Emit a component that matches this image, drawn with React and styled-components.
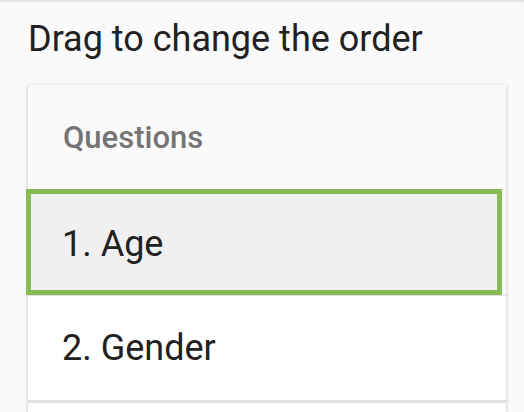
import React from 'react';
import styled, { createGlobalStyle } from 'styled-components';

const GlobalStyle = createGlobalStyle`
    html, body {
        margin: 0;
        padding: 0;
        background: #fafafa;
        font-family: Roboto, "Liberation Sans", sans-serif;
    }
`

const questions = [
    { id: 1, label: 'Age', dragging: true },
    { id: 2, label: 'Gender' },
]

export default function App() {
    return (
        <>
            <GlobalStyle />
            <Page>
                <Title>Drag to change the order</Title>
                <Card>
                    <Header>Questions</Header>
                    {
                        questions.map((q) => (
                            <Row key={q.id} $dragging={q.dragging}>
                                {q.id}. {q.label}
                            </Row>
                        ))
                    }
                    <Row />
                </Card>
            </Page>
        </>
    )
}

const Page = styled.div`
    min-height: 100vh;
    box-sizing: border-box;
    padding: 18px 18px 0 28px;
    background: #fafafa;
    box-shadow: inset 0 3px 3px -2px rgba(0, 0, 0, 0.18);
    overflow: hidden;
`

const Title = styled.h1`
    margin: 0 0 24px;
    font-size: 36px;
    line-height: 43px;
    font-weight: 400;
    color: #212121;
`

const Card = styled.div`
    background: #fafafa;
    box-shadow: 0 1px 4px rgba(0, 0, 0, 0.2), 0 1px 1px rgba(0, 0, 0, 0.12);
    display: flex;
    flex-direction: column;
`

const Header = styled.div`
    height: 104px;
    display: flex;
    align-items: center;
    padding-left: 35px;
    font-size: 31px;
    font-weight: 500;
    color: #757575;
`

const Row = styled.div`
    display: flex;
    align-items: center;
    box-sizing: border-box;
    font-size: 36px;
    color: #212121;
    height: ${(props) => props.$dragging ? '106px' : '107px'};
    padding-left: ${(props) => props.$dragging ? '31px' : '34px'};
    padding-top: ${(props) => props.$dragging ? '3px' : '0'};
    margin: ${(props) => props.$dragging ? '0 4px 0 -2px' : '0'};
    background: ${(props) => props.$dragging ? '#f0f0f0' : '#ffffff'};
    border: ${(props) => props.$dragging ? '5px solid #88bb55' : 'none'};
    border-bottom: ${(props) => props.$dragging ? '5px solid #88bb55' : '2px solid #e0e0e0'};
    border-top: ${(props) => props.$dragging ? '5px solid #88bb55' : '1px solid #e0e0e0'};
`
